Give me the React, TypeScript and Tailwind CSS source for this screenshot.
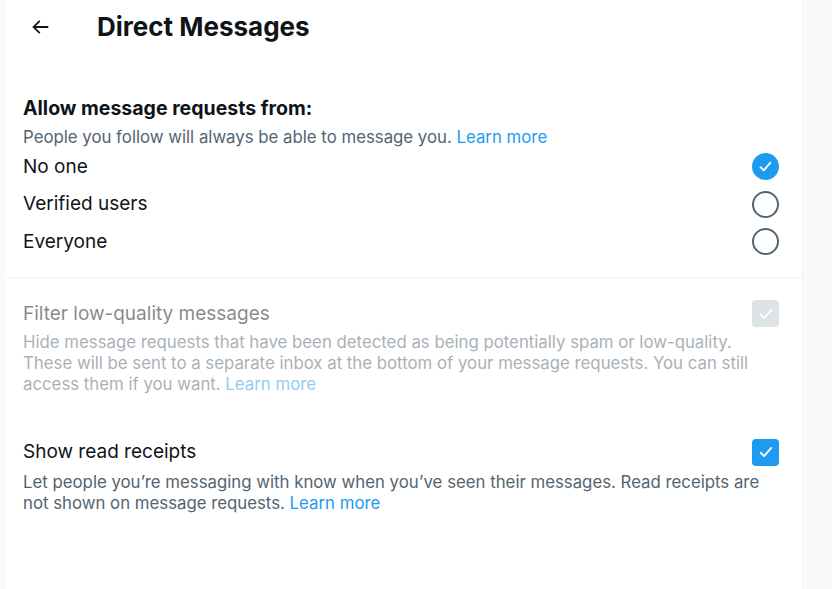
import React from "react";

function Radio({ checked }: { checked?: boolean }) {
  if (checked) {
    return (
      <div className="w-[27px] h-[27px] rounded-full bg-[#1d9bf0] flex items-center justify-center">
        <svg viewBox="0 0 24 24" className="w-[17px] h-[17px]" fill="none" stroke="white" strokeWidth="2.6" strokeLinecap="round" strokeLinejoin="round">
          <path d="M5 13l4.5 4.5L19 6.5" />
        </svg>
      </div>
    );
  }
  return <div className="w-[27px] h-[27px] rounded-full border-2 border-[#536471]" />;
}

function Check({ disabled }: { disabled?: boolean }) {
  return (
    <div className={`w-[27px] h-[27px] rounded-[4px] flex items-center justify-center ${disabled ? "bg-[#cfd9de] opacity-70" : "bg-[#1d9bf0]"}`}>
      <svg viewBox="0 0 24 24" className="w-[18px] h-[18px]" fill="none" stroke="white" strokeWidth="2.4" strokeLinecap="round" strokeLinejoin="round">
        <path d="M5 13l4.5 4.5L19 6.5" />
      </svg>
    </div>
  );
}

export default function App() {
  const font = { fontFamily: "Inter, 'Noto Sans', sans-serif" };
  return (
    <div className="w-[832px] h-[589px] bg-[#fafafa] flex" style={font}>
      <div className="ml-[5px] w-[798px] h-full bg-white border-r border-[#eff3f4] flex flex-col">
        <div className="h-[53px] flex items-center pl-[24px]">
          <svg viewBox="0 0 24 24" className="w-[22px] h-[22px]" fill="#0f1419">
            <path d="M7.414 13l5.043 5.04-1.414 1.42L3.586 12l7.457-7.46 1.414 1.42L7.414 11H21v2H7.414z" />
          </svg>
          <div className="ml-[46px] text-[26px] font-bold text-[#0f1419]">Direct Messages</div>
        </div>
        <div className="pl-[18px] pr-[23px] pt-[41px]">
          <div className="text-[19.5px] font-bold text-[#0f1419] leading-[28px]">Allow message requests from:</div>
          <div className="text-[16.8px] text-[#536471] leading-[24px] mt-[3px]">
            People you follow will always be able to message you. <span className="text-[#1d9bf0]">Learn more</span>
          </div>
          <div className="flex flex-col mt-[-1px]">
            {[
              ["No one", true],
              ["Verified users", false],
              ["Everyone", false],
            ].map(([label, c]) => (
              <div key={label as string} className="h-[37.5px] flex items-center justify-between">
                <span className="text-[19px] text-[#0f1419]">{label as string}</span>
                <Radio checked={c as boolean} />
              </div>
            ))}
          </div>
        </div>
        <div className="mt-[16px] h-px bg-[#eff3f4]" />
        <div className="pl-[18px] pr-[23px] pt-[22px]">
          <div className="flex items-center justify-between">
            <span className="text-[19px] text-[#0f1419] opacity-50">Filter low-quality messages</span>
            <Check disabled />
          </div>
          <div className="text-[16.8px] text-[#536471] leading-[21px] mt-[4px] max-w-[740px] opacity-50">
            Hide message requests that have been detected as being potentially spam or low-quality. These will be sent to a separate inbox at the bottom of your message requests. You can still access them if you want. <span className="text-[#1d9bf0]">Learn more</span>
          </div>
        </div>
        <div className="pl-[18px] pr-[23px] pt-[43px]">
          <div className="flex items-center justify-between">
            <span className="text-[19px] text-[#0f1419]">Show read receipts</span>
            <Check />
          </div>
          <div className="text-[16.8px] text-[#536471] leading-[21px] mt-[5px] max-w-[740px]">
            Let people you’re messaging with know when you’ve seen their messages. Read receipts are not shown on message requests. <span className="text-[#1d9bf0]">Learn more</span>
          </div>
        </div>
      </div>
    </div>
  );
}
